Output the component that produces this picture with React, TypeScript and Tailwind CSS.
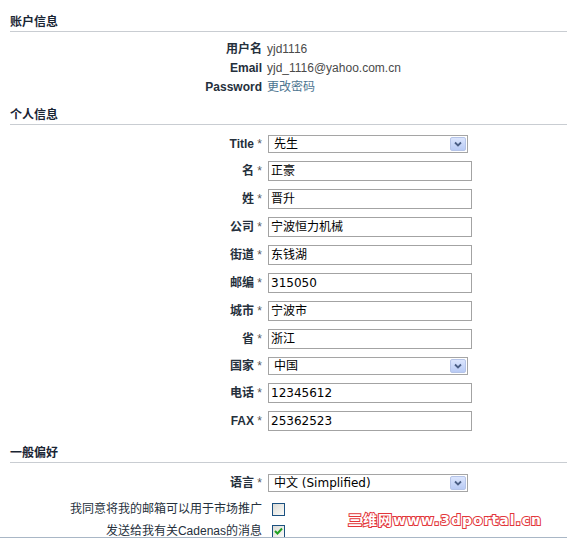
import React, {FC} from "react";

const labelFont = "font-['Liberation_Sans','Noto_Sans_CJK_SC',sans-serif]";
const inputFont = "font-['DejaVu_Sans','Noto_Sans_CJK_SC',sans-serif]";

const SectionHeader: FC<{title: string, className?: string}> = ({title, className}) => (
    <div className={`leading-[16px] pb-[1px] border-b border-[#c9cdd2] text-[12px] font-bold text-[#1a2534] ${className ?? ""}`}>
        {title}
    </div>
)

const InfoRow: FC<{label: string, children: React.ReactNode}> = ({label, children}) => (
    <div className="flex h-[19px] items-center gap-[5px]">
        <div className="w-[252px] text-right font-bold text-[#25303c]">{label}</div>
        <div className="text-[#4a4a4a]">{children}</div>
    </div>
)

const FieldRow: FC<{label: string, children: React.ReactNode}> = ({label, children}) => (
    <div className="flex items-center gap-[6px]">
        <div className="w-[252px] text-right text-[#25303c]">
            <span className="font-bold">{label}</span>
            <span className="text-[#555]"> *</span>
        </div>
        {children}
    </div>
)

const TextInput: FC<{value: string}> = ({value}) => (
    <div className={`w-[204px] h-[20px] border border-[#a3a3a3] bg-white pl-[2px] leading-[18px] text-[12px] text-black ${inputFont}`}>
        {value}
    </div>
)

const Select: FC<{value: string}> = ({value}) => (
    <div className={`w-[200px] h-[18px] border border-[#a5a5a5] bg-white flex items-center justify-between pl-[5px] pr-[1px] text-[12px] text-black ${inputFont}`}>
        <span className="leading-[16px]">{value}</span>
        <div className="w-[16px] h-[14px] border border-[#b5c4e8] rounded-[2px] bg-gradient-to-b from-[#dbe5fd] to-[#b9cbf5] flex items-center justify-center">
            <svg width="8" height="6" viewBox="0 0 8 6">
                <path d="M1 1.5 L4 4.5 L7 1.5" fill="none" stroke="#4b5f86" strokeWidth="1.8" />
            </svg>
        </div>
    </div>
)

const Checkbox: FC<{checked?: boolean}> = ({checked}) => (
    <div className="ml-[4px] w-[13px] h-[13px] border border-[#1c5180] bg-gradient-to-br from-[#dcdcd7] to-[#fbfbf9] flex items-center justify-center">
        {checked && (
            <svg width="9" height="8" viewBox="0 0 9 8">
                <path d="M1 4 L3.5 6.5 L8 1.5" fill="none" stroke="#21a121" strokeWidth="2" />
            </svg>
        )}
    </div>
)

const App: FC = () => {
    return (
        <div className={`relative w-[567px] h-[538px] overflow-hidden bg-white text-[12px] ${labelFont}`}>
            <div className="pl-[10px] pt-[14px]">
                <SectionHeader title="账户信息" />
                <div className="mt-[7px]">
                    <InfoRow label="用户名">yjd1116</InfoRow>
                    <InfoRow label="Email">yjd_1116@yahoo.com.cn</InfoRow>
                    <InfoRow label="Password"><span className="text-[#4d7591]">更改密码</span></InfoRow>
                </div>

                <SectionHeader title="个人信息" className="mt-[11px]" />
                <div className="mt-[10px] flex flex-col gap-[8px]">
                    <FieldRow label="Title"><Select value="先生" /></FieldRow>
                    <FieldRow label="名"><TextInput value="正豪" /></FieldRow>
                    <FieldRow label="姓"><TextInput value="晋升" /></FieldRow>
                    <FieldRow label="公司"><TextInput value="宁波恒力机械" /></FieldRow>
                    <FieldRow label="街道"><TextInput value="东钱湖" /></FieldRow>
                    <FieldRow label="邮编"><TextInput value="315050" /></FieldRow>
                    <FieldRow label="城市"><TextInput value="宁波市" /></FieldRow>
                    <FieldRow label="省"><TextInput value="浙江" /></FieldRow>
                    <FieldRow label="国家"><Select value="中国" /></FieldRow>
                    <FieldRow label="电话"><TextInput value="12345612" /></FieldRow>
                    <FieldRow label="FAX"><TextInput value="25362523" /></FieldRow>
                </div>

                <SectionHeader title="一般偏好" className="mt-[14px]" />
                <div className="mt-[11px]">
                    <FieldRow label="语言"><Select value="中文 (Simplified)" /></FieldRow>
                </div>
                <div className="mt-[6px]">
                    <div className="flex h-[22px] items-center gap-[6px]">
                        <div className="w-[252px] text-right text-[#25303c]">我同意将我的邮箱可以用于市场推广</div>
                        <Checkbox />
                    </div>
                    <div className="flex h-[22px] items-center gap-[6px]">
                        <div className="w-[252px] text-right text-[#25303c]">发送给我有关Cadenas的消息</div>
                        <Checkbox checked />
                    </div>
                </div>
            </div>

            <div className="absolute left-0 right-0 bottom-0 h-[1px] bg-[#a9b7c6]" />

            <div className="absolute left-[348px] top-[511px] text-[14px] font-bold leading-[18px] tracking-[1px] text-white [-webkit-text-stroke:2px_#e2363a] [paint-order:stroke_fill] font-['DejaVu_Sans','Noto_Sans_CJK_SC',sans-serif]">
                三维网www.3dportal.cn
            </div>
        </div>
    )
}

export default App
